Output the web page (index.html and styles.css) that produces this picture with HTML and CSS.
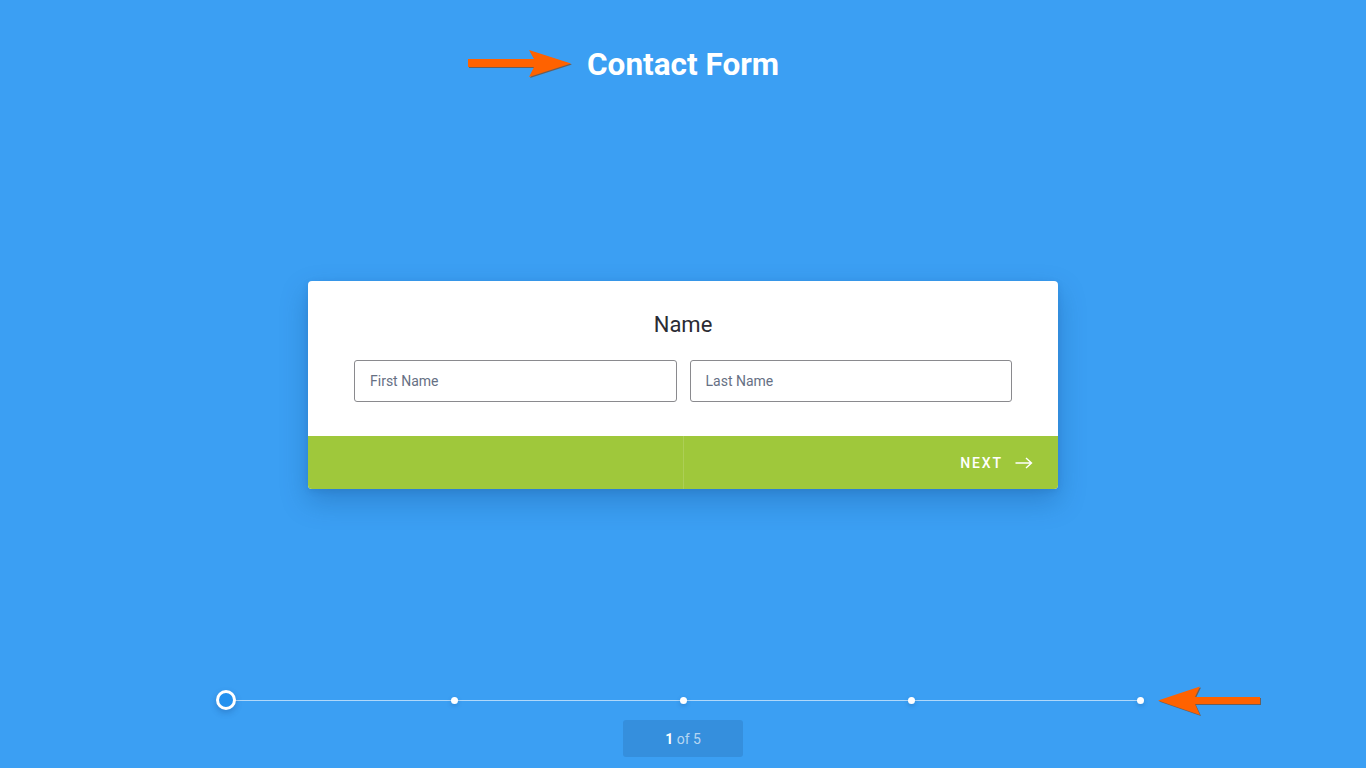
FILE: index.html
```html
<!DOCTYPE html>
<html lang="en">
<head>
<meta charset="utf-8">
<title>Contact Form</title>
<link rel="stylesheet" href="styles.css">
</head>
<body>
<div class="page">
  <header class="header">
    <h1 class="title">
      <svg class="anno anno-top" width="106" height="31" viewBox="0 0 106 31">
        <polygon class="anno-shadow" points="1,11 67,11 62,2 104,15.5 62,29 67,19 1,19"/>
        <polygon class="anno-fill" points="0,10 66,10 61,1 103,14.5 61,28 66,18 0,18"/>
      </svg>
      Contact Form
    </h1>
  </header>

  <main class="main">
    <section class="card">
      <div class="card-body">
        <h2 class="question">Name</h2>
        <div class="fields">
          <input class="field" type="text" placeholder="First Name">
          <input class="field" type="text" placeholder="Last Name">
        </div>
      </div>
      <div class="card-footer">
        <div class="nav-half"></div>
        <div class="nav-half nav-next">
          <span class="next-label">NEXT</span>
          <svg class="next-arrow" width="18" height="12" viewBox="0 0 18 12">
            <path d="M0.5 6 H16.5 M11 1 L16.5 6 L11 11" fill="none" stroke="#fff" stroke-width="1.4"/>
          </svg>
        </div>
      </div>
    </section>
  </main>

  <footer class="footer">
    <div class="timeline">
      <div class="track"></div>
      <div class="stop"><span class="dot dot-current"></span></div>
      <div class="stop"><span class="dot"></span></div>
      <div class="stop"><span class="dot"></span></div>
      <div class="stop"><span class="dot"></span></div>
      <div class="stop"><span class="dot"></span></div>
      <svg class="anno anno-bottom" width="106" height="32" viewBox="0 0 106 32">
        <polygon class="anno-shadow" points="2,16.5 44,2.5 39,13 104,13 104,20 39,20 44,31"/>
        <polygon class="anno-fill" points="1,15.5 43,1.5 38,12 103,12 103,19 38,19 43,30"/>
      </svg>
    </div>
    <div class="counter"><b>1</b> of 5</div>
  </footer>
</div>
</body>
</html>
```

FILE: styles.css
```css
html, body {
  margin: 0;
  padding: 0;
}

body {
  background: #3b9ff3;
  font-family: Roboto, "Liberation Sans", Arial, sans-serif;
  overflow: hidden;
}

.page {
  height: 100vh;
  display: flex;
  flex-direction: column;
  align-items: center;
}

.header {
  padding-top: 47px;
  display: flex;
  justify-content: center;
}

.title {
  position: relative;
  margin: 0;
  font-size: 31.5px;
  line-height: 36px;
  font-weight: 700;
  color: #ffffff;
}

.anno {
  position: absolute;
  overflow: visible;
}

.anno-fill {
  fill: #ff6200;
}

.anno-shadow {
  fill: #7a4a2a;
  opacity: 0.75;
}

.anno-top {
  right: calc(100% + 13px);
  top: 2px;
}

.main {
  margin-top: 198px;
}

.card {
  width: 750px;
  background: #ffffff;
  border-radius: 4px;
  overflow: hidden;
  box-shadow: 0 12px 28px rgba(10, 60, 120, 0.28), 0 2px 6px rgba(10, 60, 120, 0.12);
}

.card-body {
  padding: 30px 46px 34px;
}

.question {
  margin: 0 0 23px;
  text-align: center;
  font-size: 22px;
  line-height: 27px;
  font-weight: 400;
  color: #2b2b33;
}

.fields {
  display: flex;
  gap: 13px;
  margin-top: -1px;
}

.field {
  flex: 1 1 0;
  min-width: 0;
  height: 42px;
  box-sizing: border-box;
  border: 1px solid #8a8a8e;
  border-radius: 3px;
  padding: 0 15px;
  font-family: Roboto, "Liberation Sans", Arial, sans-serif;
  font-size: 14px;
  color: #333;
  background: #fff;
  outline: none;
}

.field::placeholder {
  color: #667084;
  opacity: 1;
}

.card-footer {
  display: grid;
  grid-template-columns: 1fr 1fr;
  height: 53px;
  background: #9fc83b;
}

.nav-half {
  min-width: 0;
}

.nav-half + .nav-half {
  border-left: 1px solid rgba(255, 255, 255, 0.14);
}

.nav-next {
  display: flex;
  align-items: center;
  justify-content: flex-end;
  padding-right: 25px;
  gap: 12px;
}

.next-label {
  font-size: 14px;
  font-weight: 500;
  letter-spacing: 1.9px;
  color: #ffffff;
}

.next-arrow {
  display: block;
}

.footer {
  margin-top: 201px;
  display: flex;
  flex-direction: column;
  align-items: center;
}

.timeline {
  position: relative;
  width: 914px;
  height: 20px;
  display: flex;
  justify-content: space-between;
  align-items: center;
}

.track {
  position: absolute;
  left: 0;
  right: 0;
  top: 10px;
  height: 1px;
  background: rgba(255, 255, 255, 0.6);
}

.stop {
  width: 0;
  display: flex;
  justify-content: center;
  position: relative;
}

.dot {
  flex: none;
  width: 7px;
  height: 7px;
  border-radius: 50%;
  background: #ffffff;
  box-shadow: 0 2px 4px rgba(20, 70, 140, 0.25);
}

.dot-current {
  width: 14px;
  height: 14px;
  border: 3px solid #ffffff;
  background: #2391ef;
  box-shadow: 0 3px 6px rgba(20, 70, 140, 0.3);
}

.anno-bottom {
  left: calc(100% + 17px);
  top: -5px;
}

.counter {
  margin-top: 10px;
  width: 120px;
  height: 37px;
  border-radius: 3px;
  background: #358fdd;
  color: rgba(255, 255, 255, 0.65);
  font-size: 14px;
  line-height: 38px;
  text-align: center;
}

.counter b {
  color: #ffffff;
  font-weight: 700;
}
```
